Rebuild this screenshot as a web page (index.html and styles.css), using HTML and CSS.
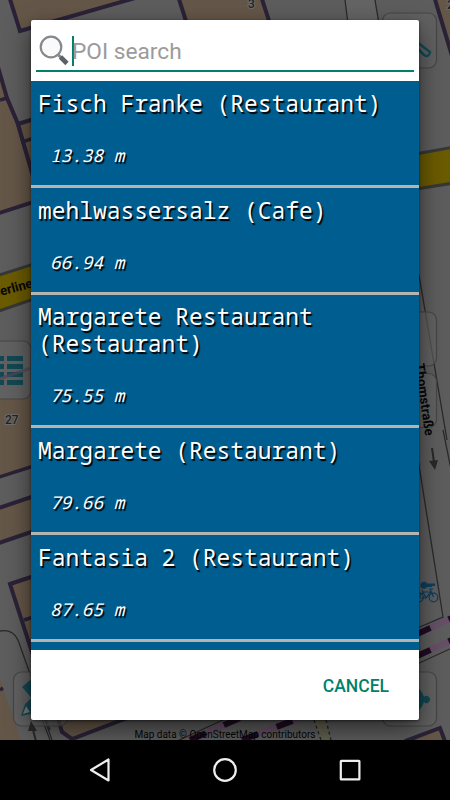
FILE: index.html
```
<!DOCTYPE html>
<html lang="en">
<head>
    <meta charset="UTF-8">
    <meta name="viewport" content="width=device-width, initial-scale=1.0">
    <title>POI search</title>
    <link rel="stylesheet" href="styles.css">
</head>
<body>
    <div class="screen">
        <!-- Map behind the dialog -->
        <svg class="map" width="450" height="740" viewBox="0 0 450 740" aria-hidden="true">
            <g class="building">
                <path d="M9-4 20 31 135-2V-8Z"/>
                <path d="M178-4 187 24H270L261-4Z"/>
                <path d="M-4 60 7 98 18 124 40 200-4 214Z"/>
                <path d="M18 124 40 117V200Z"/>
                <path d="M434-4 452 56V-4Z"/>
                <path d="M-4 509 40 494V529L-4 544Z"/>
                <path d="M10 584 40 574V677Z"/>
                <path d="M57 715 62 732 72 739 135 715Z"/>
                <path d="M405 741 440 728 446 744Z"/>
            </g>
            <path class="ground" d="M0 398H40V464L0 477ZM0 680 21 740H0Z"/>
            <g class="wall">
                <path d="M0 100 7 98M22 142 40 136M-4 478 40 464M24 620 40 615M0 690 3 688"/>
            </g>
            <path class="lane" d="M345 0 348 24H379L375 0Z"/>
            <path class="road" d="M-4 276 40 262V297L-4 312Z"/>
            <path class="road" d="M410 155 454 147V183L410 190Z"/>
            <g class="thin">
                <path d="M345 0 348 24M375 0 379 24"/>
                <path d="M0 631Q13 629 18 640L50 730M45 720 52 740M38 708 50 740"/>
                <path d="M419 275 447 440M443 430 454 484M415 440 443 617 415 629M415 665 454 647M175 742 225 719M245 740 300 718"/>
            </g>
            <g class="rail">
                <path d="M190 740 240 718M242 740 300 718M415 635 454 617M415 657 454 639"/>
            </g>
            <g class="rail-dash">
                <path d="M190 740 240 718M242 740 300 718M415 635 454 617M415 657 454 639"/>
            </g>
            <path class="path-fill" d="M314 720H326L331 740H321Z"/>
            <path class="path-dots" d="M314 720 321 740M326 720 331 740"/>

            <!-- Map buttons -->
            <g class="map-button">
                <rect x="382.500" y="13" width="54" height="55" rx="8"/>
                <rect x="-20" y="341" width="51" height="58" rx="8"/>
                <rect x="382.500" y="312" width="54" height="54" rx="8"/>
                <rect x="382.500" y="373.500" width="54" height="54" rx="8"/>
                <rect x="13.500" y="672" width="54" height="54" rx="8"/>
                <rect x="382.500" y="672" width="54" height="54" rx="8"/>
            </g>
            <path class="loop" d="M416 47 424 55Q429 58 430 52L417 42"/>
            <g class="teal">
                <path d="M0 356H4V361H0ZM7 356H23V361H7ZM0 364H4V369H0ZM7 364H23V369H7ZM0 372H4V377H0ZM7 372H23V377H7ZM0 380H4V385H0ZM7 380H23V385H7Z"/>
                <path d="M22 687 36 675V703ZM21 716 25 704 35 695V713Z"/>
                <path d="M415 686Q422 690 424 697A3.500 3.500 0 1 1 424 702Q421 710 415 713Z"/>
            </g>
            <path class="faint-wall" d="M-4 380 40 365"/>
            <path class="pencil" d="M23 714 26 706 30 712Z"/>
            <g class="arrow">
                <path d="M36 741 32 726M432 448 434 462"/>
                <path class="arrow-head" d="M31 721 37 731 28 731ZM435 470 429 461 438 460Z"/>
            </g>
            <g class="bike">
                <circle cx="419" cy="597.500" r="4.300"/>
                <circle cx="433.500" cy="597.500" r="4.300"/>
                <path d="M419 597 423 592H431L426 598 422 590M433.500 597 430 589H433M426 598H420"/>
                <path class="key" d="M427 583.500H435V586H432V587H427A3.500 3.500 0 1 1 427 583.500Z"/>
            </g>
            <text class="map-label" x="248" y="8">3</text>
            <text class="map-label" x="447" y="9">2</text>
            <text class="map-label" x="5" y="424">27</text>
            <text class="street" transform="translate(-7 298) rotate(-15)">Berliner</text>
            <text class="street" transform="translate(415 364) rotate(82)">Thomstraße</text>
        </svg>

        <p class="credits">Map data © OpenStreetMap contributors</p>

        <div class="dialog">
            <div class="search">
                <svg class="search-icon" width="32" height="34" viewBox="0 0 32 34" aria-hidden="true">
                    <circle cx="13" cy="13" r="10.300" fill="#fafafa" stroke="#85898d" stroke-width="2.200"/>
                    <path d="M20.500 21 23 23.500" stroke="#85898d" stroke-width="3"/>
                    <path d="M22.500 23 29 29.500" stroke="#5d6265" stroke-width="4.600"/>
                </svg>
                <span class="caret"></span>
                <span class="placeholder">POI search</span>
            </div>
            <ul class="results">
                <li class="result">
                    <div class="name">Fisch Franke (Restaurant)</div>
                    <div class="distance">13.38 m</div>
                </li>
                <li class="result">
                    <div class="name">mehlwassersalz (Cafe)</div>
                    <div class="distance">66.94 m</div>
                </li>
                <li class="result">
                    <div class="name">Margarete Restaurant (Restaurant)</div>
                    <div class="distance">75.55 m</div>
                </li>
                <li class="result">
                    <div class="name">Margarete (Restaurant)</div>
                    <div class="distance">79.66 m</div>
                </li>
                <li class="result">
                    <div class="name">Fantasia 2 (Restaurant)</div>
                    <div class="distance">87.65 m</div>
                </li>
            </ul>
            <div class="actions">
                <button class="cancel">CANCEL</button>
            </div>
        </div>

        <nav class="navbar">
            <svg width="24" height="28" viewBox="0 0 24 28"><path d="M3 14 20.500 3.500V24.500Z"/></svg>
            <svg width="28" height="28" viewBox="0 0 28 28"><circle cx="14" cy="14" r="10.800"/></svg>
            <svg width="24" height="28" viewBox="0 0 24 28"><rect x="2.800" y="4.800" width="18.600" height="18.600" rx=".5"/></svg>
        </nav>
    </div>
</body>
</html>
```
FILE: styles.css
```
* {
    margin: 0;
    padding: 0;
    box-sizing: border-box;
}

body {
    font-family: Roboto, sans-serif;
    background: #000;
}

.screen {
    position: relative;
    width: 450px;
    height: 800px;
    padding-top: 20px;
    overflow: hidden;
    display: flex;
    flex-direction: column;
    align-items: center;
}

/* map */
.map {
    position: absolute;
    top: 0;
    left: 0;
    background: #5d5d5d;
}

.building {
    fill: #655748;
    stroke: #2b2238;
    stroke-width: 4;
}

.ground {
    fill: #655748;
}

.wall {
    fill: none;
    stroke: #2b2238;
    stroke-width: 3.5;
}

.faint-wall {
    stroke: #50485a;
    stroke-width: 3;
    opacity: 0.7;
}

.lane {
    fill: #646464;
}

.road {
    fill: #6b5b00;
    stroke: #373737;
    stroke-width: 3;
}

.thin {
    fill: none;
    stroke: #2a2a2a;
    stroke-width: 1.3;
}

.rail {
    stroke: #674f67;
    stroke-width: 6;
}

.rail-dash {
    stroke: #210b24;
    stroke-width: 6;
    stroke-dasharray: 17 20;
}

.path-fill {
    fill: #626250;
}

.path-dots {
    fill: none;
    stroke: #222;
    stroke-width: 1.3;
    stroke-dasharray: 3 3;
}

.map-button {
    fill: rgba(100, 100, 100, 0.65);
    stroke: #464646;
    stroke-width: 1.2;
}

.loop {
    fill: none;
    stroke: #164b57;
    stroke-width: 2.5;
}

.teal {
    fill: #124853;
}

.pencil {
    fill: #777;
}

.arrow {
    fill: none;
    stroke: #292929;
    stroke-width: 2;
}

.arrow-head {
    fill: #292929;
    stroke: none;
}

.bike {
    fill: none;
    stroke: #0c3f61;
    stroke-width: 1.2;
}

.key {
    fill: #0c3f61;
    stroke: none;
}

.map-label {
    font: 500 12px Roboto, sans-serif;
    fill: #222;
    stroke: #6c6c6c;
    stroke-width: 2px;
    paint-order: stroke;
}

.street {
    font: 700 13.2px Roboto, sans-serif;
    fill: #080808;
}

.credits {
    position: absolute;
    top: 728px;
    left: 0;
    width: 450px;
    font-size: 10px;
    line-height: 13px;
    text-align: center;
    color: #050505;
}

/* dialog */
.dialog {
    position: relative;
    width: 388px;
    height: 700px;
    background: #fff;
    border-radius: 2px;
    overflow: hidden;
    box-shadow: 0 9px 24px rgba(0, 0, 0, 0.55), 0 1px 3px rgba(0, 0, 0, 0.5);
    display: flex;
    flex-direction: column;
}

.search {
    height: 52px;
    margin: 0 5px 9.3px;
    border-bottom: 2px solid #00806d;
    display: flex;
    align-items: center;
    padding-top: 11px;
}

.search-icon {
    margin-top: 1px;
    margin-left: 2px;
}

.caret {
    width: 2px;
    height: 30px;
    margin-left: 2px;
    background: #00806d;
}

.placeholder {
    margin-top: 1px;
    margin-left: -2px;
    font-size: 22.7px;
    color: #9b9b9b;
}

.results {
    flex: 1;
    list-style: none;
    background: #005d8f;
    overflow: hidden;
}

.result {
    padding: 9.6px 7px 16px;
    border-bottom: 3px solid #b4b4b0;
    font-family: "Droid Sans Mono", "Noto Sans Mono", "DejaVu Sans Mono", monospace;
    color: #fff;
    text-shadow: 1.5px 1.5px 1px #000;
}

.name {
    font-size: 22.9px;
    line-height: 26.6px;
}

.distance {
    margin: 24.6px 0 0 12px;
    font-size: 17.7px;
    line-height: 27px;
    font-style: italic;
}

.actions {
    height: 70px;
    display: flex;
    justify-content: flex-end;
    align-items: center;
    padding: 2px 30px 0 0;
}

.cancel {
    border: none;
    background: none;
    font: 500 17.5px Roboto, sans-serif;
    color: #00806d;
    cursor: pointer;
}

/* system bar */
.navbar {
    position: relative;
    width: 100%;
    height: 60px;
    margin-top: 20px;
    padding: 0 88px;
    background: #000;
    display: flex;
    justify-content: space-between;
    align-items: center;
    fill: none;
    stroke: #eee;
    stroke-width: 2.2;
    stroke-linejoin: round;
}
```
